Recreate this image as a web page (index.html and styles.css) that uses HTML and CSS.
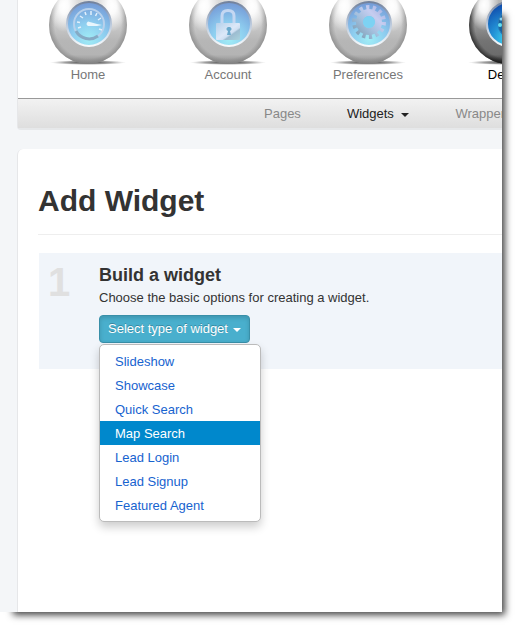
FILE: index.html
```html
<!DOCTYPE html>
<html lang="en">
<head>
<meta charset="utf-8">
<title>Add Widget</title>
<link rel="stylesheet" href="styles.css">
</head>
<body>
<svg class="defs" width="0" height="0" aria-hidden="true">
  <defs>
    <linearGradient id="metal" x1="0" y1="0" x2="0" y2="1">
      <stop offset="0" stop-color="#e4e4e4"/>
      <stop offset="0.45" stop-color="#cecece"/>
      <stop offset="0.7" stop-color="#b6b6b6"/>
      <stop offset="0.88" stop-color="#b4b4b4"/>
      <stop offset="1" stop-color="#8a8a8a"/>
    </linearGradient>
    <radialGradient id="edge">
      <stop offset="0.85" stop-color="#777" stop-opacity="0"/>
      <stop offset="1" stop-color="#777" stop-opacity="0.55"/>
    </radialGradient>
    <linearGradient id="metal-dark" x1="0" y1="0" x2="0" y2="1">
      <stop offset="0" stop-color="#c8c8c8"/>
      <stop offset="0.45" stop-color="#9c9c9c"/>
      <stop offset="0.7" stop-color="#747474"/>
      <stop offset="0.88" stop-color="#6c6c6c"/>
      <stop offset="1" stop-color="#222"/>
    </linearGradient>
    <radialGradient id="edge-dark">
      <stop offset="0.85" stop-color="#111" stop-opacity="0"/>
      <stop offset="1" stop-color="#111" stop-opacity="0.65"/>
    </radialGradient>
    <radialGradient id="gleam">
      <stop offset="0" stop-color="#fff"/>
      <stop offset="0.3" stop-color="#fff" stop-opacity="0.9"/>
      <stop offset="1" stop-color="#fff" stop-opacity="0"/>
    </radialGradient>
    <radialGradient id="glass" cx="0.5" cy="0.85" r="0.85">
      <stop offset="0" stop-color="#a0edf6"/>
      <stop offset="0.45" stop-color="#8ecdef"/>
      <stop offset="1" stop-color="#7398d6"/>
    </radialGradient>
    <radialGradient id="glass-dark" cx="0.5" cy="0.85" r="0.85">
      <stop offset="0" stop-color="#46e0f2"/>
      <stop offset="0.45" stop-color="#2391d6"/>
      <stop offset="1" stop-color="#0e46a8"/>
    </radialGradient>
    <linearGradient id="ring" x1="0" y1="0" x2="0" y2="1">
      <stop offset="0" stop-color="#71819c"/>
      <stop offset="0.5" stop-color="#b9c8dc"/>
      <stop offset="1" stop-color="#f6fafc"/>
    </linearGradient>
    <linearGradient id="silver" x1="0" y1="0" x2="1" y2="1">
      <stop offset="0" stop-color="#b4d0ea"/>
      <stop offset="0.5" stop-color="#dce8f8"/>
      <stop offset="0.62" stop-color="#cfdff2"/>
      <stop offset="0.68" stop-color="#9dbcd0"/>
      <stop offset="1" stop-color="#a9d3de"/>
    </linearGradient>
    <linearGradient id="gear" gradientUnits="userSpaceOnUse" x1="15" y1="8" x2="-13" y2="36">
      <stop offset="0" stop-color="#a9b4e2"/>
      <stop offset="0.3" stop-color="#c6cdf0"/>
      <stop offset="0.6" stop-color="#a3bfdc"/>
      <stop offset="1" stop-color="#7c9cb2"/>
    </linearGradient>
    <radialGradient id="floor">
      <stop offset="0" stop-color="#333"/>
      <stop offset="0.6" stop-color="#777" stop-opacity="0.7"/>
      <stop offset="1" stop-color="#aaa" stop-opacity="0"/>
    </radialGradient>
    <g id="ball">
      <ellipse cx="0" cy="62.500" rx="38" ry="2.500" fill="url(#floor)"/>
      <circle cx="0" cy="25" r="39" fill="url(#metal)"/>
      <circle cx="0" cy="25" r="39" fill="url(#edge)"/>
      <ellipse cx="-24" cy="6" rx="15" ry="26" fill="url(#gleam)"/>
      <ellipse cx="24" cy="6" rx="15" ry="26" fill="url(#gleam)"/>
      <circle cx="1" cy="24" r="22" fill="url(#glass)" stroke="url(#ring)" stroke-width="2"/>
    </g>
  </defs>
</svg>
<div class="window">
  <header class="header">
    <nav class="main-nav" aria-label="Main">
      <a class="main-link" href="#home">
        <svg class="orb" viewBox="-42 0 84 66" aria-hidden="true">
          <use href="#ball"/>
          <circle cx="1" cy="24" r="15" fill="none" stroke="#b8d1ec" stroke-width="2"/>
          <path d="M-12 31A15 15 0 0 0 10 36" fill="none" stroke="#86aac4" stroke-width="3"/>
          <path d="M-10 28L-7 27M-11 22L-8 22.500M-8 16L-5 18M-3 12L-2 15M3 11L3 15M9 13L7.500 16M13 18L10 20M14 30L11 29" fill="none" stroke="#e2f0fc" stroke-width="1.500"/>
          <path d="M0 21.500L9 24L14 25L9 26L0 26Q-3 24 0 21.500Z" fill="#e9f6fd"/>
        </svg>
        <span>Home</span>
      </a>
      <a class="main-link" href="#account">
        <svg class="orb" viewBox="-42 0 84 66" aria-hidden="true">
          <use href="#ball"/>
          <path d="M-6 24V16Q-6 10.500 0 10.500Q6 10.500 6 16V24" fill="none" stroke="#c4d7f2" stroke-width="3"/>
          <rect x="-12" y="23" width="24" height="17" rx="1" fill="url(#silver)"/>
          <path d="M1 27a2 2 0 0 1 1 4l1 4h-4l1-4a2 2 0 0 1 1-4z" fill="#6caacd"/>
        </svg>
        <span>Account</span>
      </a>
      <a class="main-link" href="#preferences">
        <svg class="orb" viewBox="-42 0 84 66" aria-hidden="true">
          <use href="#ball"/>
          <circle cx="1" cy="22" r="14.500" fill="none" stroke="url(#gear)" stroke-width="5" stroke-dasharray="3.200 3.308"/>
          <circle cx="1" cy="22" r="9.500" fill="none" stroke="url(#gear)" stroke-width="7"/>
          <circle cx="1" cy="22" r="6" fill="#7dd2f3"/>
        </svg>
        <span>Preferences</span>
      </a>
      <a class="main-link active" href="#design">
        <svg class="orb" viewBox="-42 0 84 66" aria-hidden="true">
          <ellipse cx="0" cy="62.500" rx="40" ry="2.500" fill="url(#floor)"/>
          <circle cx="0" cy="25" r="39" fill="url(#metal-dark)"/>
          <circle cx="0" cy="25" r="39" fill="url(#edge-dark)"/>
          <ellipse cx="-24" cy="5" rx="15" ry="26" fill="url(#gleam)"/>
          <circle cx="1" cy="24" r="22" fill="url(#glass-dark)" stroke="url(#ring)" stroke-width="2"/>
          <circle cx="5" cy="24" r="15" fill="#17639f" stroke="#2d7dbb"/>
          <circle cx="-7" cy="19" r="1.500" fill="#8bd6f4"/>
          <circle cx="-8" cy="25" r="2" fill="#65dff0"/>
          <circle cx="-4" cy="30" r="2" fill="#65dff0"/>
        </svg>
        <span>Design</span>
      </a>
    </nav>
    <nav class="sub-nav" aria-label="Design">
      <a class="sub-link" href="#pages">Pages</a>
      <a class="sub-link active" href="#widgets">Widgets <span class="caret"></span></a>
      <a class="sub-link" href="#wrappers">Wrappers</a>
    </nav>
  </header>
  <main class="card">
    <h1 class="title">Add Widget</h1>
    <section class="step">
      <div class="number">1</div>
      <div class="step-body">
        <h2 class="step-title">Build a widget</h2>
        <p class="step-text">Choose the basic options for creating a widget.</p>
        <div class="dropdown">
          <button class="select-button" type="button" aria-haspopup="true" aria-expanded="true">Select type of widget <span class="caret"></span></button>
          <ul class="menu">
            <li><a class="menu-link" href="#slideshow">Slideshow</a></li>
            <li><a class="menu-link" href="#showcase">Showcase</a></li>
            <li><a class="menu-link" href="#quick-search">Quick Search</a></li>
            <li><a class="menu-link selected" href="#map-search">Map Search</a></li>
            <li><a class="menu-link" href="#lead-login">Lead Login</a></li>
            <li><a class="menu-link" href="#lead-signup">Lead Signup</a></li>
            <li><a class="menu-link" href="#featured-agent">Featured Agent</a></li>
          </ul>
        </div>
      </div>
    </section>
  </main>
</div>
</body>
</html>
```
FILE: styles.css
```css
* {
  box-sizing: border-box;
}

body {
  margin: 0;
  padding: 0 15px 15px 0;
  background: #fff;
  color: #333;
  font: 13px/18px "Liberation Sans", Arial, sans-serif;
  overflow: hidden;
}

a {
  text-decoration: none;
}

.defs {
  position: absolute;
}

.window {
  position: relative;
  display: flex;
  flex-direction: column;
  gap: 19px;
  height: calc(100vh - 15px);
  padding-left: 17px;
  background: #f4f6f8;
  overflow: clip;
}

/* Drop shadow around the window */
body::before {
  content: "";
  position: absolute;
  inset: 14px 17px 17px 12px;
  box-shadow: 3px 3px 7px 2px #444;
}

.header {
  border-left: 1px solid #e6e7e9;
  border-bottom: 2px solid #e6e8ea;
  border-radius: 0 0 0 4px;
  background: #fff;
}

.main-nav {
  display: flex;
  height: 98px;
}

.main-link {
  display: flex;
  flex: none;
  flex-direction: column;
  align-items: center;
  width: 140px;
  color: #777;
}

.orb {
  flex: none;
  width: 84px;
  height: 66px;
}

.sub-nav {
  display: flex;
  height: 30px;
  padding-left: 223px;
  border-top: 1px solid #999;
  background: linear-gradient(#f2f2f2, #dedede);
}

.sub-link {
  flex: none;
  padding: 6px 23px;
  color: #888;
}

.main-link.active {
  color: #000;
}

.sub-link.active {
  color: #222;
}

.caret {
  display: inline-block;
  margin-left: 4px;
  border: 4px solid transparent;
  border-top-color: currentColor;
  border-bottom: 0;
  vertical-align: middle;
}

.card {
  flex: 1;
  padding: 33px 0 0 20px;
  border-left: 1px solid #e6e7e9;
  border-radius: 6px 0 0 0;
  background: #fff;
}

.title {
  margin: 0 0 18px;
  padding-bottom: 14px;
  border-bottom: 1px solid #eee;
  font-size: 30px;
  line-height: 38px;
}

.step {
  display: flex;
  min-height: 116px;
  margin-left: 1px;
  padding-top: 10px;
  background: #f1f5fa;
}

.number {
  width: 60px;
  padding-left: 9px;
  color: #e0e0e0;
  font-size: 40px;
  font-weight: bold;
  line-height: 38px;
}

.step-title {
  margin: 0;
  font-size: 18px;
  line-height: 24px;
}

.step-text {
  margin: 2px 0 8px;
}

.dropdown {
  position: relative;
}

.select-button {
  display: block;
  height: 28px;
  padding: 0 8px;
  border: 1px solid #398fa8;
  border-radius: 4px;
  background: #49afcd;
  box-shadow: inset 0 2px 4px rgba(0, 0, 0, 0.15);
  color: #fff;
  font: inherit;
  text-shadow: 0 -1px 0 rgba(0, 0, 0, 0.25);
  white-space: nowrap;
}

.select-button .caret {
  margin-left: 1px;
}

.menu {
  position: absolute;
  top: 100%;
  left: 0;
  width: 162px;
  margin: 1px 0 0;
  padding: 4px 0;
  border: 1px solid #bbb;
  border-radius: 5px;
  background: #fff;
  box-shadow: 0 5px 10px rgba(0, 0, 0, 0.2);
  list-style: none;
}

.menu-link {
  display: block;
  padding: 4px 15px 2px;
  color: #1763cf;
}

.menu-link.selected {
  background: #0088cc;
  color: #fff;
}
```
